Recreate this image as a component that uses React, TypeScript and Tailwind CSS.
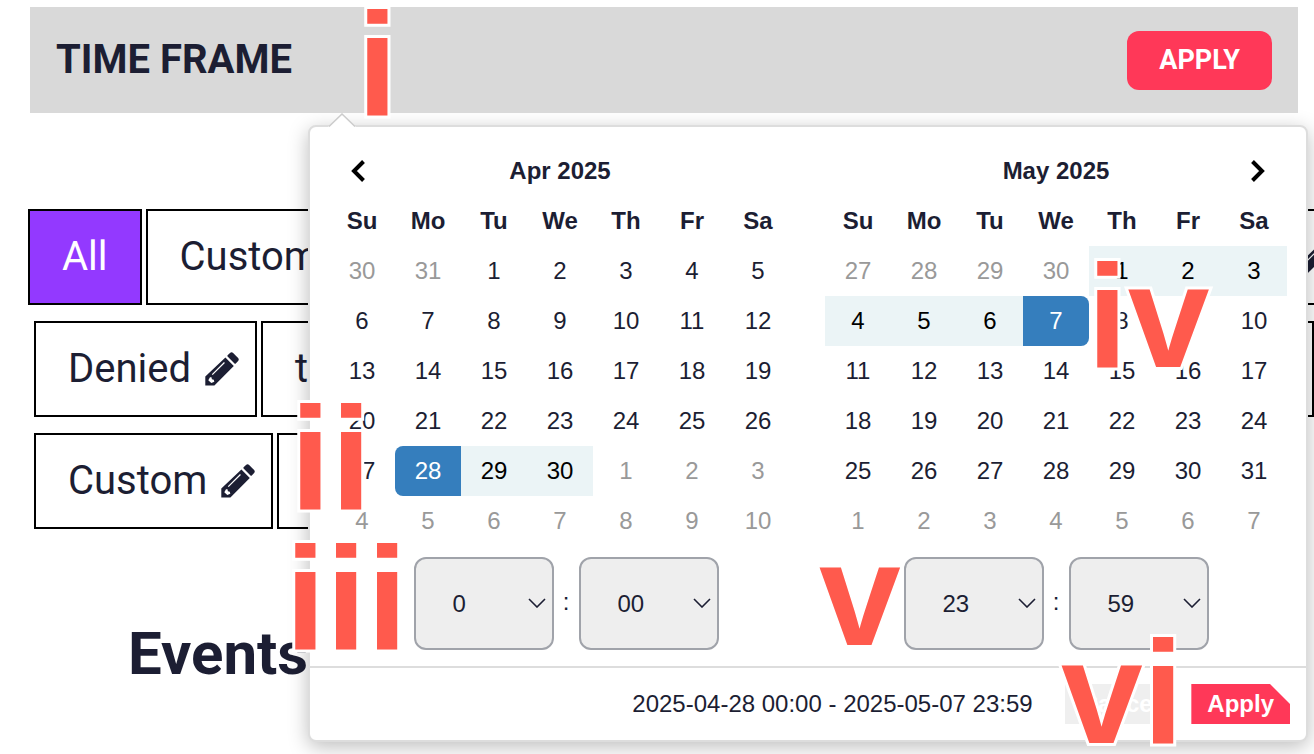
import { useState } from "react";

const DAYS = ["Su", "Mo", "Tu", "We", "Th", "Fr", "Sa"];

interface Month {
  title: string;
  before: number[];
  total: number;
  after: number;
  start?: number;
  end?: number;
  range: [number, number];
}

const april: Month = { title: "Apr 2025", before: [30, 31], total: 30, after: 10, start: 28, range: [28, 30] };
const may: Month = { title: "May 2025", before: [27, 28, 29, 30], total: 31, after: 7, end: 7, range: [1, 7] };

function buildWeeks(month: Month) {
  const cells = [
    ...month.before.map((day) => ({ day, off: true })),
    ...Array.from({ length: month.total }, (_, i) => ({ day: i + 1, off: false })),
    ...Array.from({ length: month.after }, (_, i) => ({ day: i + 1, off: true })),
  ];
  return Array.from({ length: 6 }, (_, i) => cells.slice(i * 7, i * 7 + 7));
}

function dayClass(month: Month, day: number, off: boolean) {
  if (off) return "text-[#999999]";
  if (day === month.start) return "rounded-l-lg bg-[#357ebd] text-white";
  if (day === month.end) return "rounded-r-lg bg-[#357ebd] text-white";
  if (day >= month.range[0] && day <= month.range[1]) return "bg-[#ebf4f6] text-black";
  return "";
}

function PencilIcon() {
  return (
    <svg viewBox="0 0 34 34" className="h-[34px] w-[34px] shrink-0" fill="currentColor" aria-hidden="true">
      <path d="M22.6 3.200 25 .9c.9-.9 2.200-.9 3.100 0L33.100 6c.9.9.9 2.200 0 3.100l-2.300 2.400c-.4.4-.9.4-1.300 0l-6.900-7c-.4-.4-.4-.9 0-1.300Z" />
      <path
        fillRule="evenodd"
        d="M20.400 5.400 28.800 13.900 9.400 33.600H0.300V24.600ZM5 25.200 3.300 28.200 6.300 31 9.300 29.800 8.800 27.800 6.900 27.300 6.500 25.300ZM6.800 22.200l.9.900L19.900 11l-.9-.9Z"
      />
    </svg>
  );
}

interface TagProps {
  label: string;
  active?: boolean;
  editable?: boolean;
}

function Tag({ label, active, editable }: TagProps) {
  return (
    <button
      type="button"
      className={`flex h-24 shrink-0 items-center gap-3.5 border-2 border-black pl-8 font-[Roboto,sans-serif] text-[40px] leading-none ${
        editable ? "pr-4" : "pr-8"
      } ${active ? "bg-[#9339ff] text-white" : "bg-white"}`}
    >
      {label}
      {editable && <PencilIcon />}
    </button>
  );
}

function Chevron({ direction }: { direction: "left" | "right" }) {
  return (
    <svg viewBox="0 0 16 22" className="h-[22px] w-4" fill="none" stroke="black" strokeWidth="4" aria-hidden="true">
      <path d={direction === "left" ? "M13.500 1.500 4 11l9.500 9.500" : "M2.500 1.500 12 11l-9.500 9.500"} />
    </svg>
  );
}

function Calendar({ month, nav }: { month: Month; nav: "left" | "right" }) {
  const button = (
    <button type="button" aria-label={nav === "left" ? "Previous month" : "Next month"} className="flex w-full justify-center">
      <span className={nav === "left" ? "pr-2" : "pl-2"}>
        <Chevron direction={nav} />
      </span>
    </button>
  );
  return (
    <table className="w-full table-fixed border-separate border-spacing-0 text-center">
      <thead>
        <tr className="h-[50px]">
          <th>{nav === "left" && button}</th>
          <th colSpan={5}>{month.title}</th>
          <th>{nav === "right" && button}</th>
        </tr>
        <tr className="h-[50px]">
          {DAYS.map((day) => (
            <th key={day}>{day}</th>
          ))}
        </tr>
      </thead>
      <tbody>
        {buildWeeks(month).map((week, i) => (
          <tr key={i} className="h-[50px]">
            {week.map(({ day, off }, j) => (
              <td key={j} className={dayClass(month, day, off)}>
                {day}
              </td>
            ))}
          </tr>
        ))}
      </tbody>
    </table>
  );
}

interface TimeSelectProps {
  label: string;
  initial: string;
  options: string[];
}

function TimeSelect({ label, initial, options }: TimeSelectProps) {
  const [value, setValue] = useState(initial);
  return (
    <div className="relative">
      <select
        aria-label={label}
        value={value}
        onChange={(e) => setValue(e.target.value)}
        className="h-[93px] w-[140px] appearance-none rounded-xl border-2 border-[#a0a3aa] bg-[#eeeeee] pl-[37px]"
      >
        {options.map((option) => (
          <option key={option}>{option}</option>
        ))}
      </select>
      <svg
        viewBox="0 0 18 10"
        className="pointer-events-none absolute top-[41px] right-2 h-[10px] w-[18px]"
        fill="none"
        stroke="currentColor"
        strokeWidth="1.600"
        aria-hidden="true"
      >
        <path d="M1 1l8 8 8-8" />
      </svg>
    </div>
  );
}

const HOURS = Array.from({ length: 24 }, (_, i) => String(i));
const MINUTES = Array.from({ length: 60 }, (_, i) => String(i).padStart(2, "0"));

function TimePicker({ name, hour, minute }: { name: string; hour: string; minute: string }) {
  return (
    <div className="flex items-center justify-center">
      <TimeSelect label={`${name} hour`} initial={hour} options={HOURS} />
      <span className="w-[25px] pb-1 text-center">:</span>
      <TimeSelect label={`${name} minute`} initial={minute} options={MINUTES} />
    </div>
  );
}

function DateRangePicker() {
  return (
    <div className="absolute top-[125px] right-[6px] left-[308px] rounded-lg border-2 border-[#dddddd] bg-white font-['Liberation_Sans',Arial,sans-serif] text-2xl shadow-[0_5px_20px_rgba(0,0,0,0.26)]">
      {/* Pointer to the time frame bar */}
      <svg viewBox="0 0 28 14" className="absolute -top-[14px] left-[18px] h-[14px] w-7" aria-hidden="true">
        <path d="M0 14 14 1l14 13Z" fill="white" />
        <path d="M1 13.500 14 1l13 12.500" fill="none" stroke="#cccccc" strokeWidth="1.500" />
      </svg>
      <div className="grid grid-cols-2 gap-[34px] px-[19px] pt-[19px] pb-4">
        <div>
          <Calendar month={april} nav="left" />
          <div className="pt-[11px] pl-3">
            <TimePicker name="Start" hour="0" minute="00" />
          </div>
        </div>
        <div>
          <Calendar month={may} nav="right" />
          <div className="pt-[11px]">
            <TimePicker name="End" hour="23" minute="59" />
          </div>
        </div>
      </div>
      <div className="flex items-center justify-end border-t-2 border-[#dddddd] p-4">
        <span className="mr-8">2025-04-28 00:00 - 2025-05-07 23:59</span>
        <button type="button" className="mr-4 h-10 bg-[#efefef] px-4 leading-10 font-bold text-white">
          Cancel
        </button>
        <button
          type="button"
          className="h-10 bg-[#ff3858] px-4 leading-10 font-bold text-white [clip-path:polygon(0_0,calc(100%-20px)_0,100%_20px,100%_100%,0_100%)]"
        >
          Apply
        </button>
      </div>
    </div>
  );
}

// Step numbers pinned over the controls they refer to
const MARKERS = [
  { label: "i", place: "left-[357px] top-[4px]" },
  { label: "ii", place: "left-[290px] top-[398px]" },
  { label: "iii", place: "left-[285px] top-[538px]" },
  { label: "iv", place: "left-[1087px] top-[256px]" },
  { label: "v", place: "left-[819px] top-[534px]" },
  { label: "vi", place: "left-[1061px] top-[632px]" },
];

export default function App() {
  return (
    <div className="relative min-h-screen overflow-hidden bg-white text-[#1c1e33]">
      <header className="relative z-10 mt-[7px] mr-4 ml-[30px] flex h-[106px] items-center justify-between bg-[#d9d9d9] px-[26px] font-[Roboto,sans-serif]">
        <h1 className="text-[40px] leading-none font-bold">TIME FRAME</h1>
        <button type="button" className="h-[59px] rounded-xl bg-[#ff3858] px-8 text-[27px] leading-none font-bold text-white">
          APPLY
        </button>
      </header>

      <main className="pt-24">
        <div className="flex flex-col gap-4">
          <div className="-mr-9 ml-7 flex gap-1">
            <Tag label="All" active />
            <Tag label="Custom" editable />
            <button
              type="button"
              aria-label="Edit filter"
              className="flex h-24 flex-1 items-center justify-end border-2 border-black pr-4"
            >
              <PencilIcon />
            </button>
          </div>
          <div className="ml-[34px] flex gap-1">
            <Tag label="Denied" editable />
            <button
              type="button"
              className="flex h-24 flex-1 items-center border-2 border-black pl-8 font-[Roboto,sans-serif] text-[40px] leading-none"
            >
              test
            </button>
          </div>
          <div className="ml-[34px] flex gap-1">
            <Tag label="Custom" editable />
            <Tag label="Custom" editable />
          </div>
        </div>
        <h2 className="mt-[89px] ml-32 font-[Roboto,sans-serif] text-[60px] leading-[72px] font-bold">Events</h2>
      </main>

      <DateRangePicker />

      {MARKERS.map(({ label, place }) => (
        <span
          key={label}
          className={`pointer-events-none absolute z-20 font-['Liberation_Sans',Arial,sans-serif] text-[147px] leading-[120px] font-bold text-[#ff5a4d] [-webkit-text-stroke:6px_white] [paint-order:stroke_fill] ${place}`}
        >
          {label}
        </span>
      ))}
    </div>
  );
}
